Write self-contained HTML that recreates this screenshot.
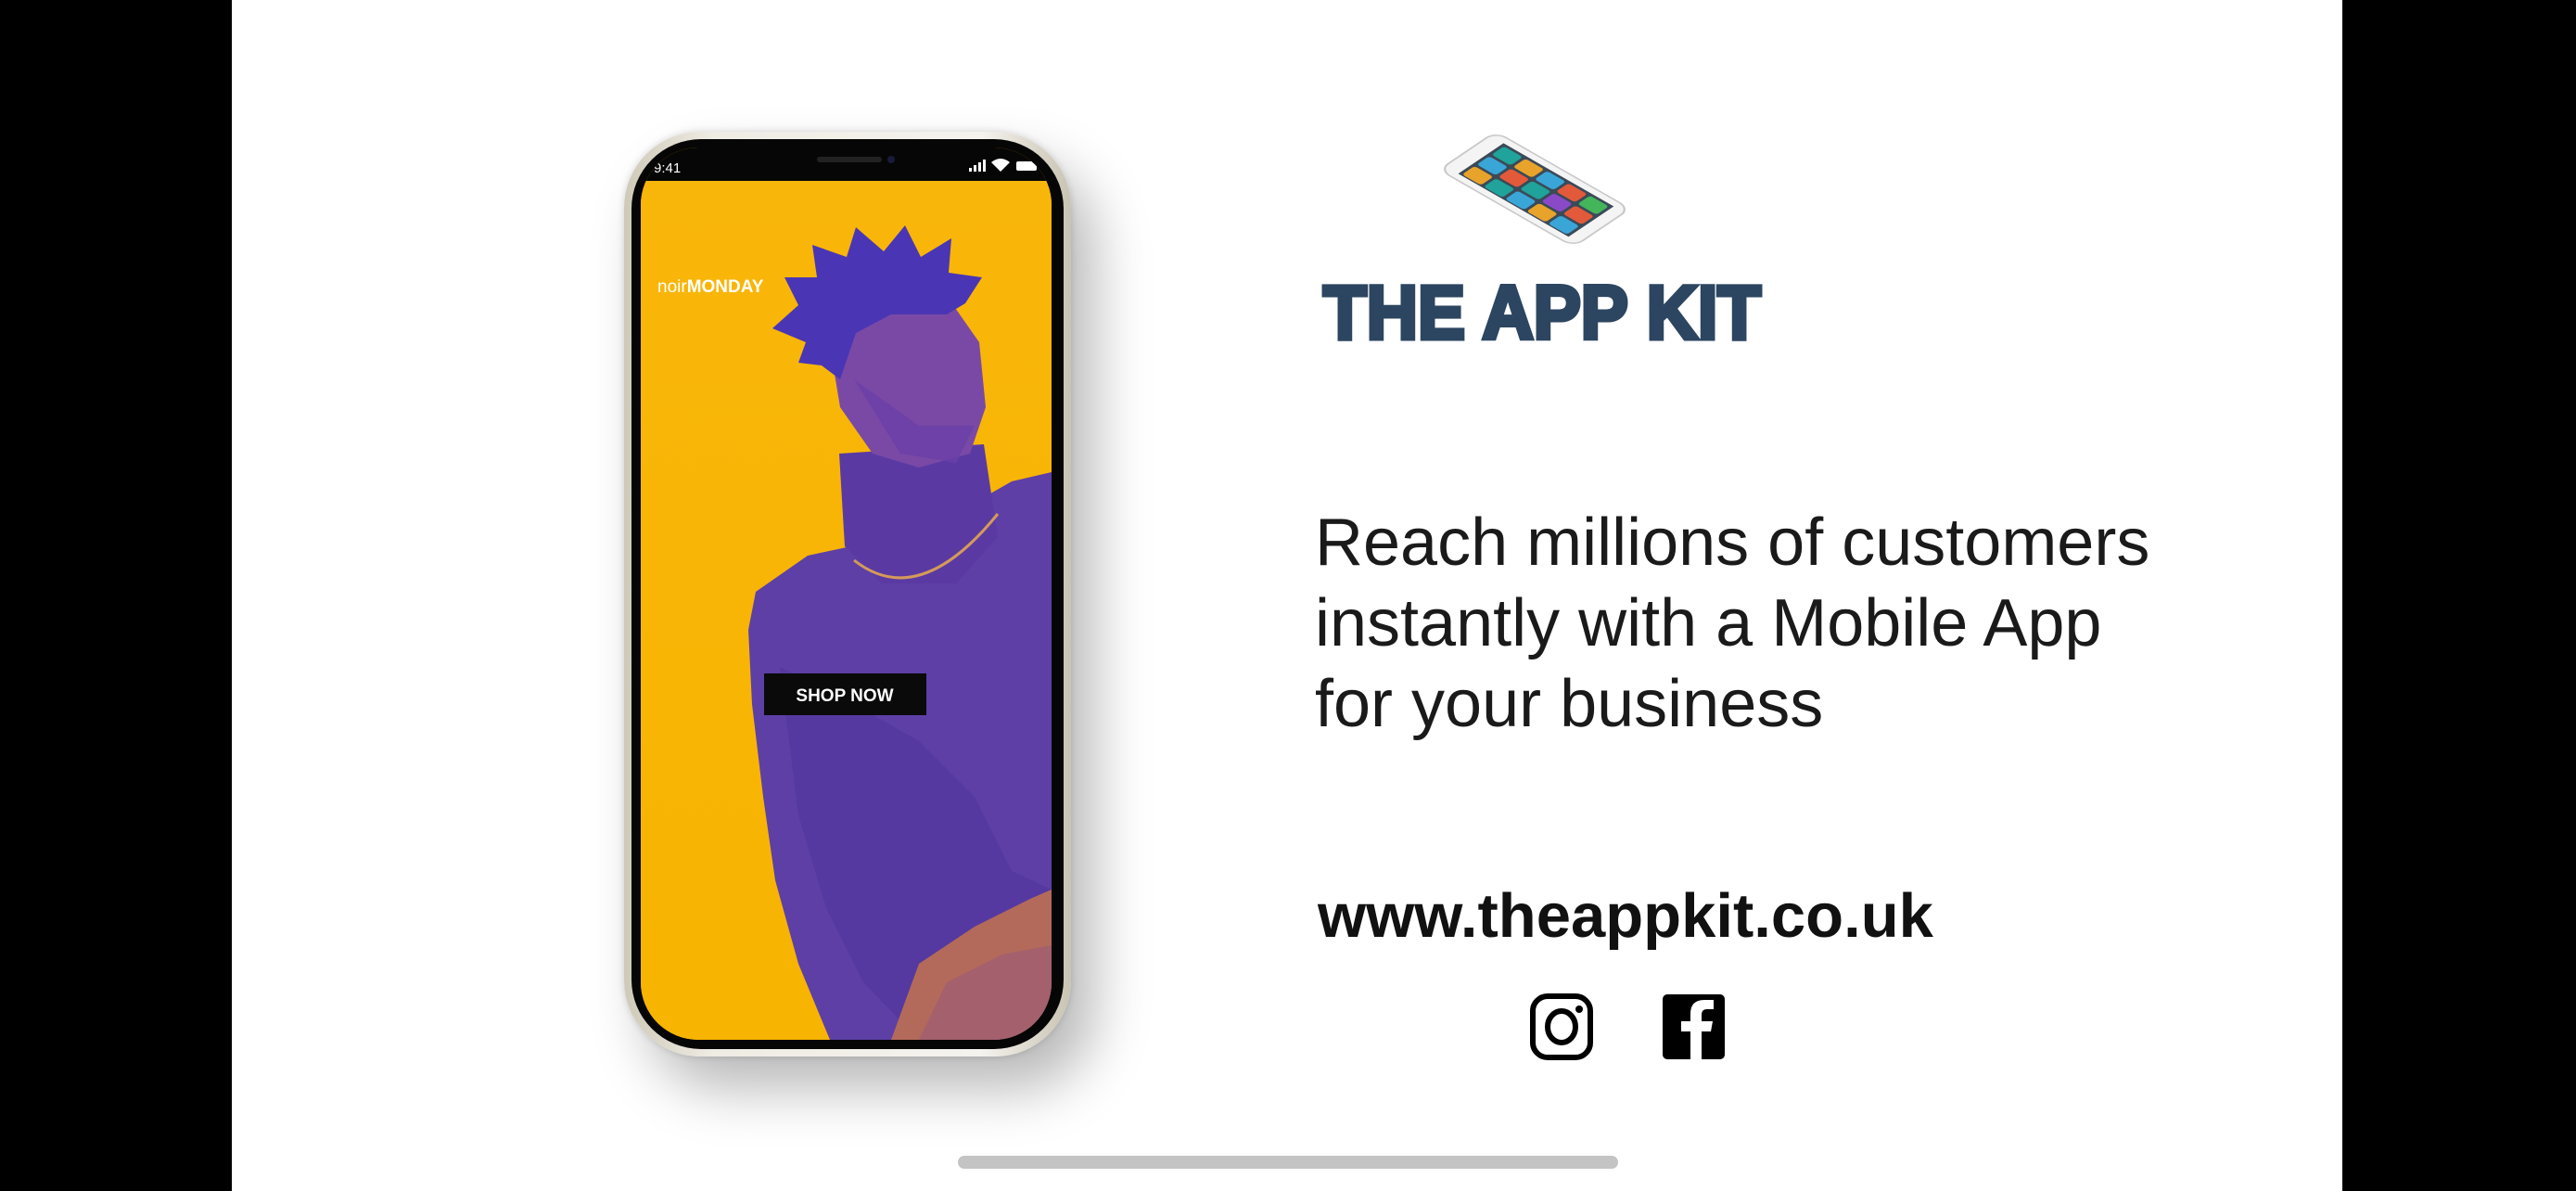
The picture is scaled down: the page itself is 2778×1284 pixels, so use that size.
<!DOCTYPE html>
<html><head><meta charset="utf-8"><style>
html,body{margin:0;padding:0;}
body{width:2778px;height:1284px;position:relative;overflow:hidden;background:#fff;font-family:"Liberation Sans",Arial,sans-serif;}
.bar{position:absolute;top:0;height:1284px;background:#000;}
.abs{position:absolute;}
.phone{left:673px;top:142px;width:482px;height:997px;border-radius:82px;background:linear-gradient(90deg,#cfc9b8,#efece4 20%,#f5f3ee 80%,#c9c3b3);box-shadow:25px 35px 60px rgba(0,0,0,0.28),0 0 8px rgba(0,0,0,0.15);}
.bezel{left:681px;top:150px;width:466px;height:981px;border-radius:75px;background:#060606;}
.screen{left:691px;top:159px;width:443px;height:962px;border-radius:62px;overflow:hidden;background:#f7b500;}
.txt{left:1418px;top:542px;font-size:72px;line-height:87px;color:#1a1a1a;white-space:nowrap;}
.url{left:1421px;top:949px;font-size:67px;font-weight:bold;color:#111;white-space:nowrap;}
</style></head><body>
<div class="bar" style="left:0;width:250px"></div>
<div class="bar" style="left:2526px;width:252px"></div>

<div class="abs phone"></div>
<div class="abs bezel"></div>
<div class="abs screen">
<svg width="443" height="962" viewBox="0 0 443 962" style="position:absolute;left:0;top:0">
 <defs><linearGradient id="y" x1="0" y1="0" x2="0" y2="1"><stop offset="0" stop-color="#f9b60a"/><stop offset="1" stop-color="#f7b400"/></linearGradient></defs>
 <rect x="0" y="36" width="443" height="926" fill="url(#y)"/>
 <rect x="0" y="0" width="443" height="36" fill="#060606"/>
 <path d="M124 479 L180 440 L250 425 L330 400 L400 360 L443 350 L443 962 L204 962 L170 880 L145 790 L132 700 L120 600 L116 520 Z" fill="#5d3fa6"/>
 <path d="M150 560 L230 600 L300 640 L360 700 L400 780 L443 800 L443 962 L300 962 L240 900 L200 820 L170 720 Z" fill="#52389e" opacity="0.7"/>
 <path d="M270 962 L300 880 L360 840 L420 810 L443 800 L443 962 Z" fill="#b46a5a"/>
 <path d="M300 962 L330 900 L390 870 L443 860 L443 962 Z" fill="#9a5a7a" opacity="0.6"/>
 <path d="M214 330 L370 320 L385 420 L340 470 L260 470 L220 430 Z" fill="#5a3aa2"/>
 <path d="M230 445 Q300 500 385 395" stroke="#d49a5a" stroke-width="3" fill="none"/>
 <path d="M205 175 L330 160 L365 210 L372 280 L355 330 L300 345 L250 330 L215 280 L205 220 Z" fill="#7a49a6"/>
 <path d="M230 250 L280 330 L340 340 L360 300 L300 300 Z" fill="#6a40a8" opacity="0.8"/>
 <path d="M142 195 L170 170 L155 140 L190 140 L185 105 L222 118 L232 86 L262 112 L285 84 L302 118 L335 98 L332 135 L368 140 L350 168 L330 180 L270 180 L232 200 L215 250 L195 235 L170 232 L178 210 Z" fill="#4a36b4"/>
 <text x="18" y="156" font-family="Liberation Sans,sans-serif" font-size="19" fill="#fff"><tspan>noir</tspan><tspan font-weight="bold">MONDAY</tspan></text>
 <rect x="133" y="567" width="175" height="45" fill="#0a0a0a"/>
 <text x="220" y="597" text-anchor="middle" font-family="Liberation Sans,sans-serif" font-weight="bold" font-size="19" fill="#fff">SHOP NOW</text>
 <text x="14" y="27" font-family="Liberation Sans,sans-serif" font-size="15" fill="#fff">9:41</text>
 <rect x="190" y="10" width="70" height="6" rx="3" fill="#222"/>
 <circle cx="270" cy="13" r="4" fill="#1a1a3a"/>
 <g fill="#fff"><rect x="354" y="22" width="3" height="4"/><rect x="359" y="19" width="3" height="7"/><rect x="364" y="16" width="3" height="10"/><rect x="369" y="13" width="3" height="13"/>
 <path d="M378 16 Q388 8 398 16 L388 26 Z"/><rect x="405" y="15" width="22" height="10" rx="2"/></g>
</svg>
</div>

<svg class="abs" style="left:0;top:0" width="2778" height="400">
 <g transform="matrix(1.45,0.83,-1.22,0.82,1613,142)">
  <rect x="0" y="0" width="100" height="50" rx="8" fill="#f4f4f4" stroke="#c8c8c8" stroke-width="1.2"/>
  <rect x="10" y="5" width="82" height="40" fill="#3b4a58"/>
  <g>
   <rect x="12" y="7" width="14" height="11" rx="2" fill="#1fa39a"/><rect x="28" y="7" width="14" height="11" rx="2" fill="#e8a32a"/><rect x="44" y="7" width="14" height="11" rx="2" fill="#3aa6d8"/><rect x="60" y="7" width="14" height="11" rx="2" fill="#e25a3a"/><rect x="76" y="7" width="14" height="11" rx="2" fill="#44b55a"/>
   <rect x="12" y="20" width="14" height="11" rx="2" fill="#3aa6d8"/><rect x="28" y="20" width="14" height="11" rx="2" fill="#e25a3a"/><rect x="44" y="20" width="14" height="11" rx="2" fill="#1fa39a"/><rect x="60" y="20" width="14" height="11" rx="2" fill="#8a4ac8"/><rect x="76" y="20" width="14" height="11" rx="2" fill="#e25a3a"/>
   <rect x="12" y="33" width="14" height="11" rx="2" fill="#e8a32a"/><rect x="28" y="33" width="14" height="11" rx="2" fill="#1fa39a"/><rect x="44" y="33" width="14" height="11" rx="2" fill="#3aa6d8"/><rect x="60" y="33" width="14" height="11" rx="2" fill="#e8a32a"/><rect x="76" y="33" width="14" height="11" rx="2" fill="#3aa6d8"/>
  </g>
 </g>
 <text x="1427" y="365" font-family="Liberation Sans,sans-serif" font-weight="bold" font-size="82" fill="#2c4560" stroke="#2c4560" stroke-width="5" textLength="472" lengthAdjust="spacingAndGlyphs">THE APP KIT</text>
</svg>

<div class="abs txt">Reach millions of customers<br>instantly with a Mobile App<br>for your business</div>
<div class="abs url">www.theappkit.co.uk</div>

<svg class="abs" style="left:1645px;top:1068px" width="230" height="80">
 <rect x="8" y="6" width="62" height="66" rx="16" fill="none" stroke="#000" stroke-width="6"/>
 <ellipse cx="39" cy="39" rx="15" ry="17" fill="none" stroke="#000" stroke-width="6"/>
 <circle cx="58" cy="20" r="4" fill="#000"/>
 <rect x="148" y="4" width="67" height="70" rx="5" fill="#000"/>
 <path d="M190 74 V44 H200 L202 33 H190 V26 Q190 20 196 20 H203 V10 H193 Q178 10 178 25 V33 H168 V44 H178 V74 Z" fill="#fff"/>
</svg>

<div class="abs" style="left:1033px;top:1246px;width:712px;height:14px;border-radius:7px;background:#c4c4c4"></div>
</body></html>
